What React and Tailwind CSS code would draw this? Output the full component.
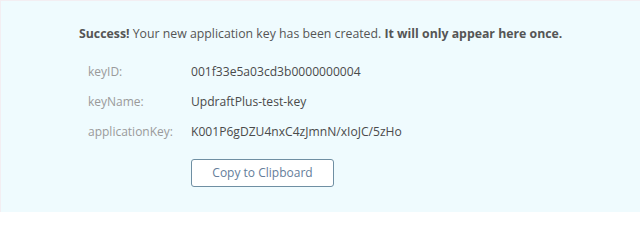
import React from 'react';

const rows = [
  { label: 'keyID:', value: '001f33e5a03cd3b0000000004' },
  { label: 'keyName:', value: 'UpdraftPlus-test-key' },
  { label: 'applicationKey:', value: 'K001P6gDZU4nxC4zJmnN/xIoJC/5zHo' },
];

const App = () => {
  return (
    <div
      className="w-[640px] h-[212px] overflow-hidden bg-[#effbfe] border-t border-l border-[#f3eef2] pt-[25px] pl-[78px] text-[12px] text-[#555]"
      style={{ fontFamily: '"Open Sans", sans-serif' }}
    >
      <p className="leading-[16px] text-[12.3px]">
        <span className="font-bold">Success!</span> Your new application key has been created.{' '}
        <span className="font-bold">It will only appear here once.</span>
      </p>
      <div className="mt-[22px] pl-[9px] flex flex-col gap-[14px]">
        {rows.map((row) => (
          <div key={row.label} className="flex leading-[16px]">
            <span className="w-[103px] text-[#9a9a9a]">{row.label}</span>
            <span className="text-[#4a4a4a] text-[12.1px]">{row.value}</span>
          </div>
        ))}
      </div>
      <div className="mt-[19px] pl-[112px]">
        <button className="h-[28px] w-[143px] rounded-[3px] border border-[#6f8fa3] bg-white text-[#647d9a] text-[12px]">
          Copy to Clipboard
        </button>
      </div>
    </div>
  );
};

export default App;
